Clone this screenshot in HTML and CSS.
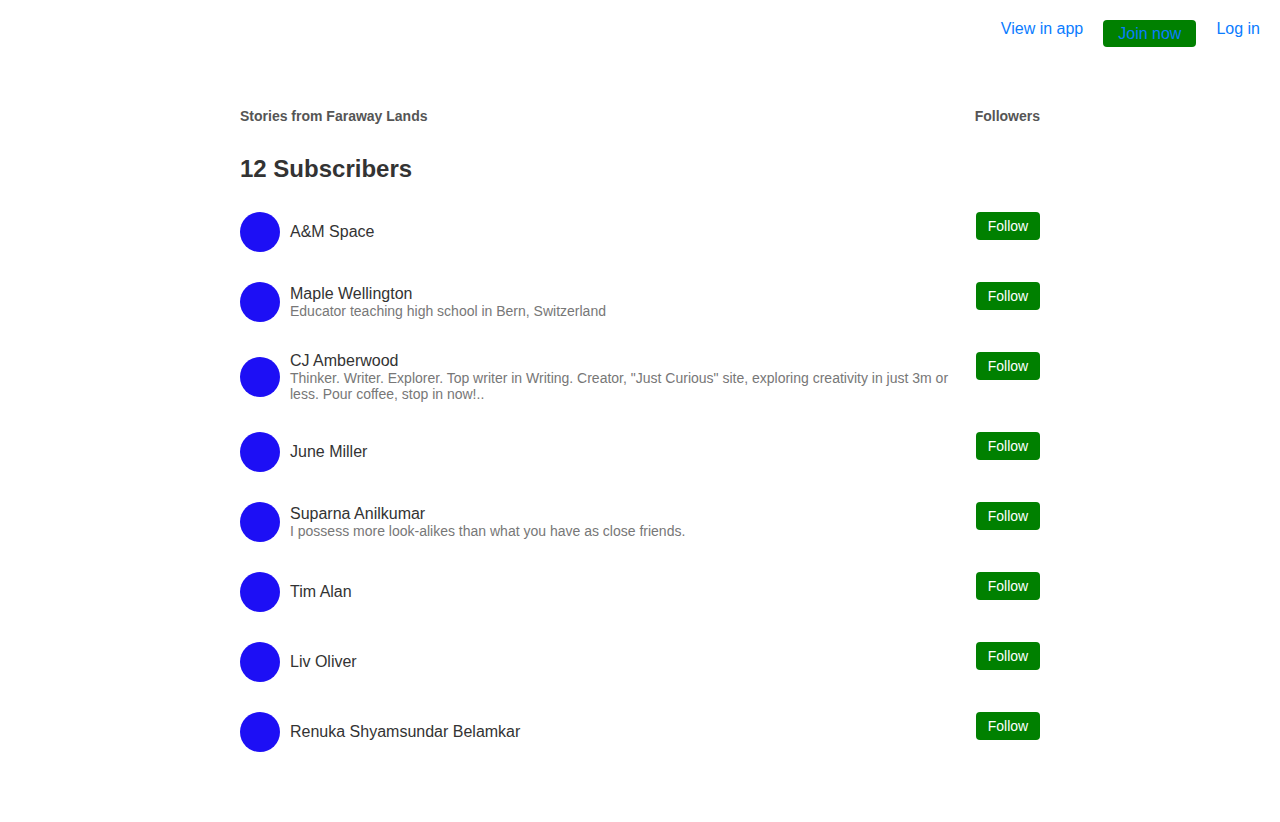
FILE: index.html
```html
<!DOCTYPE html>
<html>
<head>
<meta charset="utf-8">
<link rel="stylesheet" href="styles.css">
</head>
<body>
<nav class="topnav">
  <a class="nav-link" href="#">View in app</a>
  <a class="nav-join" href="#">Join now</a>
  <a class="nav-link" href="#">Log in</a>
</nav>
<main class="page">
  <div class="page-head">
    <span class="pub">Stories from Faraway Lands</span>
    <span class="pub">Followers</span>
  </div>
  <h1 class="title">12 Subscribers</h1>
  <ul class="list">
    <li class="row">
      <div class="who"><span class="avatar"></span><div class="info"><div class="name">A&amp;M Space</div></div></div>
      <button class="follow">Follow</button>
    </li>
    <li class="row">
      <div class="who"><span class="avatar"></span><div class="info"><div class="name">Maple Wellington</div><div class="bio">Educator teaching high school in Bern, Switzerland</div></div></div>
      <button class="follow">Follow</button>
    </li>
    <li class="row">
      <div class="who"><span class="avatar"></span><div class="info"><div class="name">CJ Amberwood</div><div class="bio">Thinker. Writer. Explorer. Top writer in Writing. Creator, "Just Curious" site, exploring creativity in just 3m or less. Pour coffee, stop in now!..</div></div></div>
      <button class="follow">Follow</button>
    </li>
    <li class="row">
      <div class="who"><span class="avatar"></span><div class="info"><div class="name">June Miller</div></div></div>
      <button class="follow">Follow</button>
    </li>
    <li class="row">
      <div class="who"><span class="avatar"></span><div class="info"><div class="name">Suparna Anilkumar</div><div class="bio">I possess more look-alikes than what you have as close friends.</div></div></div>
      <button class="follow">Follow</button>
    </li>
    <li class="row">
      <div class="who"><span class="avatar"></span><div class="info"><div class="name">Tim Alan</div></div></div>
      <button class="follow">Follow</button>
    </li>
    <li class="row">
      <div class="who"><span class="avatar"></span><div class="info"><div class="name">Liv Oliver</div></div></div>
      <button class="follow">Follow</button>
    </li>
    <li class="row">
      <div class="who"><span class="avatar"></span><div class="info"><div class="name">Renuka Shyamsundar Belamkar</div></div></div>
      <button class="follow">Follow</button>
    </li>
  </ul>
</main>
</body>
</html>
```

FILE: styles.css
```css
* { box-sizing: border-box; }
body {
  margin: 0;
  font-family: "Liberation Sans", Arial, sans-serif;
  background: #fff;
  color: #333;
}
.topnav {
  display: flex;
  justify-content: flex-end;
  align-items: flex-start;
  gap: 20px;
  height: 47px;
  padding: 20px 20px 0 0;
}
.nav-link {
  color: #0a7cff;
  text-decoration: none;
  font-size: 16px;
  line-height: 18px;
}
.nav-join {
  display: block;
  background: #008000;
  color: #0a7cff;
  text-decoration: none;
  font-size: 16px;
  line-height: 18px;
  padding: 5px 15px 4px;
  border-radius: 4px;
  white-space: nowrap;
  text-align: center;
}
.page {
  width: 800px;
  margin: 0 auto;
  padding-top: 60px;
}
.page-head {
  display: flex;
  justify-content: space-between;
}
.pub {
  font-size: 14px;
  font-weight: bold;
  color: #555;
  line-height: 18px;
}
.title {
  margin: 30px 0 0;
  font-size: 24px;
  line-height: 28px;
  font-weight: bold;
  color: #333;
}
.list {
  list-style: none;
  margin: 0;
  padding: 29px 0 0;
}
.row {
  display: flex;
  justify-content: space-between;
  align-items: flex-start;
  margin-bottom: 30px;
}
.who {
  display: flex;
  align-items: center;
  gap: 10px;
  flex: 1;
  padding-right: 20px;
}
.avatar {
  flex: none;
  width: 40px;
  height: 40px;
  border-radius: 50%;
  background: #1d0ff5;
}
.name {
  font-size: 16px;
  line-height: 18px;
  color: #333;
}
.bio {
  font-size: 14px;
  line-height: 16px;
  color: #777;
}
.follow {
  flex: none;
  width: 64px;
  height: 28px;
  border: none;
  border-radius: 4px;
  background: #008000;
  color: #fff;
  font-family: "Liberation Sans", Arial, sans-serif;
  font-size: 14px;
  padding: 0;
  cursor: pointer;
}
```
